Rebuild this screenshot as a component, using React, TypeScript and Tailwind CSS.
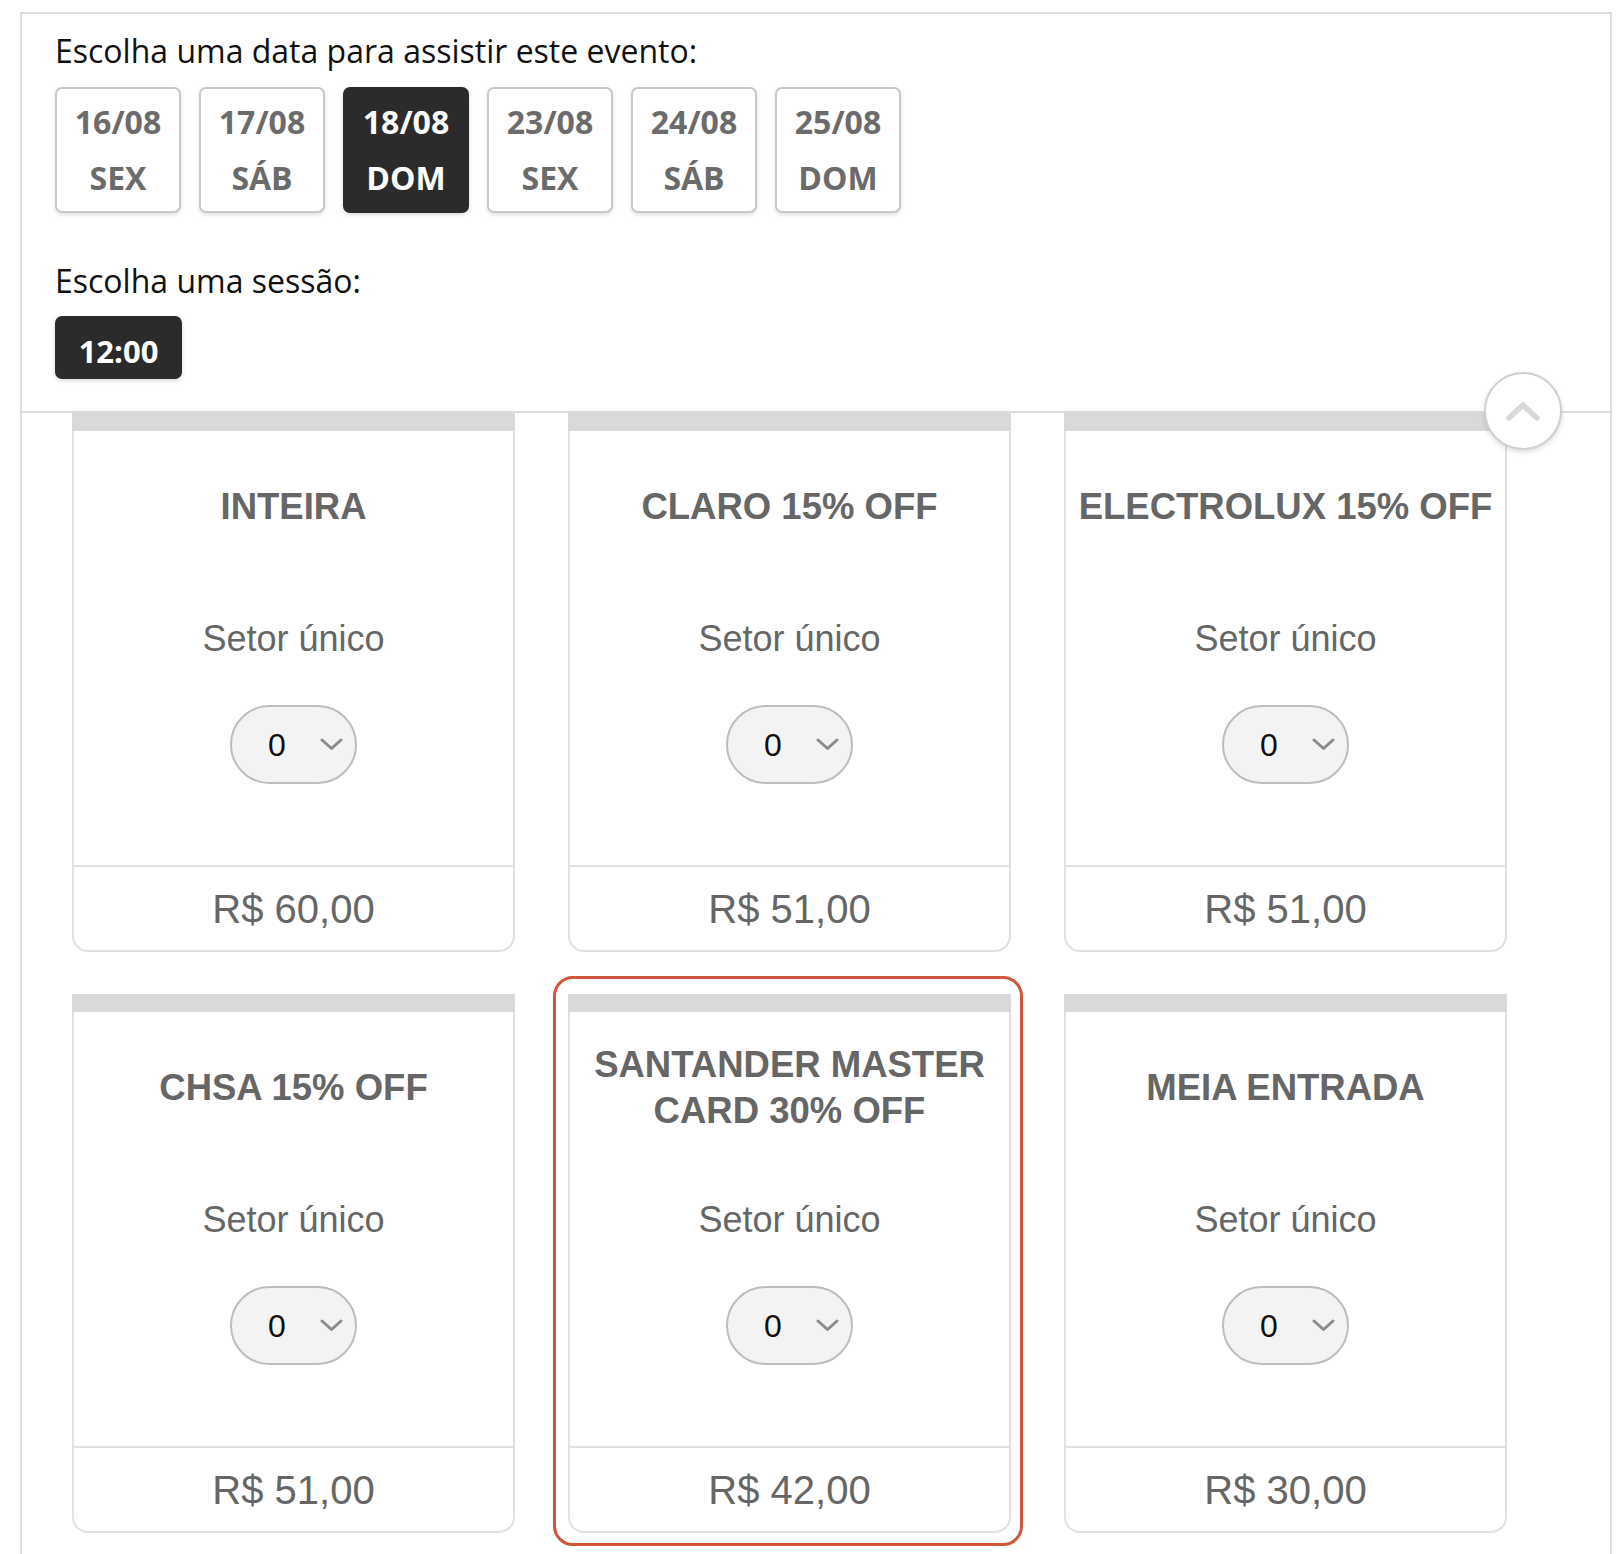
import React from "react";

const dates = [
  { d: "16/08", w: "SEX", active: false },
  { d: "17/08", w: "SÁB", active: false },
  { d: "18/08", w: "DOM", active: true },
  { d: "23/08", w: "SEX", active: false },
  { d: "24/08", w: "SÁB", active: false },
  { d: "25/08", w: "DOM", active: false },
];

const tickets = [
  { name: "INTEIRA", price: "R$ 60,00", highlight: false },
  { name: "CLARO 15% OFF", price: "R$ 51,00", highlight: false },
  { name: "ELECTROLUX 15% OFF", price: "R$ 51,00", highlight: false },
  { name: "CHSA 15% OFF", price: "R$ 51,00", highlight: false },
  { name: "SANTANDER MASTER CARD 30% OFF", price: "R$ 42,00", highlight: true },
  { name: "MEIA ENTRADA", price: "R$ 30,00", highlight: false },
];

function Chevron() {
  return (
    <svg width="23" height="13" viewBox="0 0 23 13" fill="none">
      <polyline points="2,2 11.5,10.5 21,2" stroke="#8a8a8a" strokeWidth="3" strokeLinecap="round" strokeLinejoin="round" />
    </svg>
  );
}

function TicketCard({ name, price, highlight }: { name: string; price: string; highlight: boolean }) {
  return (
    <div className="relative">
      {highlight && (
        <div className="pointer-events-none absolute -left-[15px] -top-[18px] -right-[12px] -bottom-[13px] rounded-[20px] border-[3px] border-[#d0553b]" />
      )}
      <div className="h-[18px] bg-[#d9d9d9]" />
      <div className="flex flex-col items-center border-x-2 border-b-2 border-[#e0e0e0] rounded-b-[16px] font-['Liberation_Sans',Arial,sans-serif] text-[#666666]">
        <div className="flex h-[152px] w-full items-center justify-center px-[10px] text-center text-[36.5px] font-bold leading-[46px]">
          {name}
        </div>
        <div className="mt-[36px] h-[40px] text-[36px] leading-[40px]">Setor único</div>
        <div className="mt-[46px] flex h-[79px] w-[127px] items-center gap-[34px] rounded-full border-2 border-[#bdbdbd] bg-[#f3f3f3] pl-[36px]">
          <span className="text-[32px] leading-[40px] text-[#111111]">0</span>
          <Chevron />
        </div>
        <div className="mt-[81px] flex h-[85px] w-full items-center justify-center border-t-2 border-[#e0e0e0] text-[40px] leading-[44px]">
          {price}
        </div>
      </div>
    </div>
  );
}

export default function App() {
  return (
    <div className="min-h-screen bg-white pl-[20px] pt-[12px]">
      <div className="relative w-[1592px] border-x-2 border-t-2 border-[#dedede] pb-[60px]">
        <div className="border-b-2 border-[#dedede] pb-[32px] pl-[33px] pt-[17px] font-['Open_Sans',sans-serif]">
          <div className="text-[32px] leading-[40px] text-[#111111]">Escolha uma data para assistir este evento:</div>
          <div className="mt-[16px] flex gap-[18px]">
            {dates.map((x) => (
              <div
                key={x.d}
                className={
                  x.active
                    ? "flex h-[126px] w-[126px] flex-col items-center justify-center rounded-[7px] border-2 border-[#2b2b2b] bg-[#2b2b2b] text-[32px] font-bold leading-[56px] text-white shadow-[0_2px_4px_rgba(0,0,0,0.15)]"
                    : "flex h-[126px] w-[126px] flex-col items-center justify-center rounded-[7px] border-2 border-[#c8c8c8] bg-white text-[32px] font-bold leading-[56px] text-[#6b6b6b] shadow-[0_2px_4px_rgba(0,0,0,0.12)]"
                }
              >
                <span>{x.d}</span>
                <span>{x.w}</span>
              </div>
            ))}
          </div>
          <div className="mt-[48px] text-[32px] leading-[40px] text-[#111111]">Escolha uma sessão:</div>
          <div className="mt-[15px] flex h-[63px] w-[127px] items-center justify-center rounded-[7px] bg-[#2b2b2b] pt-[6px] text-[31px] font-bold leading-[40px] text-white shadow-[0_2px_4px_rgba(0,0,0,0.15)]">
            12:00
          </div>
        </div>

        <div className="grid grid-cols-[repeat(3,443px)] gap-x-[53px] gap-y-[42px] pl-[50px]">
          {tickets.map((t) => (
            <TicketCard key={t.name} {...t} />
          ))}
        </div>

        <div className="absolute left-[1462px] top-[358px] z-10 flex h-[78px] w-[78px] items-center justify-center rounded-full border-2 border-[#cfcfcf] bg-white shadow-[0_2px_5px_rgba(0,0,0,0.15)]">
          <svg width="36" height="22" viewBox="0 0 36 22" fill="none">
            <polyline points="4,18 18,5 32,18" stroke="#d9d9d9" strokeWidth="5.5" strokeLinecap="round" strokeLinejoin="round" />
          </svg>
        </div>
      </div>
    </div>
  );
}
